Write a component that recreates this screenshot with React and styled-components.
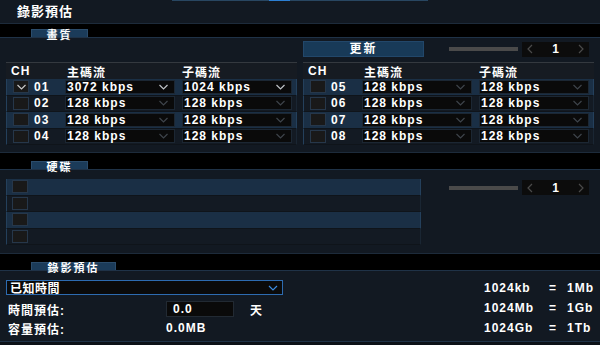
import React from 'react'
import styled, { createGlobalStyle } from 'styled-components'

const GlobalStyle = createGlobalStyle`
  html, body { margin: 0; padding: 0; background: #0d1218; }
  body { font-family: "Liberation Sans", "Noto Sans CJK TC", sans-serif; }
`

const Page = styled.div`
  width: 600px;
  height: 345px;
  background: #121922;
  color: #fff;
  font-weight: bold;
  overflow: hidden;
  display: flex;
  flex-direction: column;
`

const Header = styled.div`
  height: 23px;
  display: flex;
  flex-direction: column;
`

const TopLine = styled.div`
  margin-left: 172px;
  width: 256px;
  height: 1px;
  background: #284661;
  display: flex;
`

const TopLineActive = styled.div`
  margin-left: 97px;
  width: 21px;
  background: #2b7fd4;
`

const Title = styled.div`
  padding-left: 17px;
  margin-top: 1px;
  font-size: 13px;
  line-height: 20px;
  letter-spacing: 1px;
`

const Band = styled.div`
  height: ${p => p.h}px;
  background: #000;
  border-top: 1px solid #1d2b3b;
  border-bottom: 1px solid #1f3247;
  display: flex;
  align-items: flex-end;
  padding-left: 31px;
`

const Tab = styled.div`
  width: ${p => p.w}px;
  height: 8px;
  box-sizing: border-box;
  background: #1b3b59;
  border: 1px solid #2b4c6b;
  border-bottom: none;
  font-size: 11px;
  line-height: 11px;
  text-align: center;
  letter-spacing: 2px;
  white-space: nowrap;
`

const Panel = styled.div`
  height: ${p => p.h}px;
  box-sizing: border-box;
  padding: ${p => p.pad || '0 6px'};
  display: flex;
  flex-direction: ${p => p.dir || 'column'};
`

const Toolbar = styled.div`
  display: flex;
  padding-left: 297px;
  height: 16px;
  align-items: center;
`

const UpdateButton = styled.div`
  width: 121px;
  height: 16px;
  box-sizing: border-box;
  background: #183a58;
  border: 1px solid #22476a;
  font-size: 12px;
  line-height: 14px;
  text-align: center;
  letter-spacing: 2px;
`

const Slider = styled.div`
  width: 69px;
  height: 4px;
  background: #4a4a4a;
  margin-left: ${p => p.ml}px;
`

const Pager = styled.div`
  width: 67px;
  height: 15px;
  background: #0c0c0c;
  display: flex;
  align-items: center;
  justify-content: space-between;
  padding: 0 5px;
  box-sizing: border-box;
  font-size: 12px;
`

const Tables = styled.div`
  display: flex;
  gap: 6px;
  margin-top: 5px;
`

const Table = styled.div`
  width: 291px;
  display: flex;
  flex-direction: column;
`

const HeadRow = styled.div`
  height: 17px;
  display: flex;
  align-items: center;
  background: #161b22;
  border-top: 1px solid #34393f;
  box-sizing: border-box;
  font-size: 12px;
  letter-spacing: 1px;
`

const HeadCell = styled.div`
  width: ${p => p.w ? p.w + 'px' : 'auto'};
  padding-left: ${p => p.pl || 0}px;
  box-sizing: border-box;
`

const Row = styled.div`
  height: 16.5px;
  box-sizing: border-box;
  display: flex;
  align-items: center;
  background: ${p => p.alt ? '#1a2f45' : '#131a23'};
  border-left: 1px solid #24405c;
  border-right: 1px solid ${p => p.alt ? '#24405c' : '#1a2633'};
  border-bottom: 1px solid #0f141a;
  font-size: 12px;
  letter-spacing: 1px;
`

const Check = styled.div`
  width: 16px;
  height: 13px;
  box-sizing: border-box;
  margin-left: ${p => p.ml || 6}px;
  background: #191919;
  border: 1px solid #26374a;
  display: flex;
  align-items: center;
  justify-content: center;
`

const Num = styled.div`
  width: 26px;
  margin-left: 5px;
`

const Select = styled.div`
  width: ${p => p.w}px;
  height: 14px;
  margin-left: ${p => p.ml}px;
  box-sizing: border-box;
  background: #0a0a0a;
  border: 1px solid ${p => p.active ? '#2d6bb0' : '#1c2733'};
  display: flex;
  align-items: center;
  justify-content: space-between;
  padding: 0 6px 0 1px;
  white-space: nowrap;
`

const DiskArea = styled.div`
  display: flex;
  margin-top: 9px;
`

const DiskList = styled.div`
  width: 415px;
  display: flex;
  flex-direction: column;
`

const DiskControls = styled.div`
  display: flex;
  align-items: center;
  height: 15px;
  margin-top: 1px;
`

const EstimateLeft = styled.div`
  width: 300px;
  display: flex;
  flex-direction: column;
  padding-top: 9px;
`

const ModeSelect = styled(Select)`
  height: 15px;
  margin-left: 0;
  padding: 0 4px 0 3px;
  font-size: 12px;
  letter-spacing: 0.5px;
`

const FieldRow = styled.div`
  display: flex;
  align-items: center;
  height: 16px;
  margin-top: ${p => p.mt}px;
  font-size: 12px;
  letter-spacing: 1px;
`

const FieldLabel = styled.div`
  width: 158px;
  padding-left: 2px;
`

const NumInput = styled.div`
  width: 68px;
  height: 16px;
  box-sizing: border-box;
  background: #0a0a0a;
  border: 1px solid #222a33;
  padding-left: 6px;
  line-height: 14px;
`

const Unit = styled.div`
  margin-left: 16px;
`

const Conversions = styled.div`
  margin-left: 186px;
  padding-top: 7px;
  display: grid;
  grid-template-columns: 65px 18px auto;
  grid-auto-rows: 20px;
  align-items: center;
  font-size: 12px;
  letter-spacing: 1px;
`

const Footer = styled.div`
  flex: 1;
  border-top: 1px solid #1f3247;
  background: #0c1117;
`

const Chevron = ({ color = '#4a4f55', w = 9 }) => (
  <svg width={w} height="6" viewBox="0 0 9 6">
    <polyline points="0.5,1 4.5,5 8.5,1" fill="none" stroke={color} strokeWidth="1.2" />
  </svg>
)

const Arrow = ({ dir }) => (
  <svg width="6" height="10" viewBox="0 0 6 10">
    <polyline points={dir === 'left' ? '5,1 1,5 5,9' : '1,1 5,5 1,9'} fill="none" stroke="#4a4a4a" strokeWidth="1.2" />
  </svg>
)

const PagerBox = ({ ml }) => (
  <Pager style={{ marginLeft: ml }}>
    <Arrow dir="left" />
    <span>1</span>
    <Arrow dir="right" />
  </Pager>
)

const left = ['01', '02', '03', '04']
const right = ['05', '06', '07', '08']

const StreamTable = ({ chans, first }) => (
  <Table>
    <HeadRow>
      <HeadCell w={60} pl={5}>CH</HeadCell>
      <HeadCell w={116} pl={1}>主碼流</HeadCell>
      <HeadCell>子碼流</HeadCell>
    </HeadRow>
    {chans.map((ch, i) => {
      const on = first && i === 0
      return (
        <Row key={ch} alt={i % 2 === 0}>
          <Check>{on && <Chevron color="#c8c8c8" w={9} />}</Check>
          <Num>{ch}</Num>
          <Select w={110} ml={5}>
            <span>{on ? '3072 kbps' : '128 kbps'}</span>
            <Chevron color={on ? '#bfc3c7' : '#3e444b'} />
          </Select>
          <Select w={110} ml={7}>
            <span>{on ? '1024 kbps' : '128 kbps'}</span>
            <Chevron color={on ? '#bfc3c7' : '#3e444b'} />
          </Select>
        </Row>
      )
    })}
  </Table>
)

export default function App() {
  return (
    <Page>
      <GlobalStyle />
      <Header>
        <TopLine><TopLineActive /></TopLine>
        <Title>錄影預估</Title>
      </Header>

      <Band h={13}><Tab w={57}>畫質</Tab></Band>
      <Panel h={114} pad="3px 6px 0">
        <Toolbar>
          <UpdateButton>更新</UpdateButton>
          <Slider ml={25} />
          <PagerBox ml={4} />
        </Toolbar>
        <Tables>
          <StreamTable chans={left} first />
          <StreamTable chans={right} />
        </Tables>
      </Panel>

      <Band h={16}><Tab w={57}>硬碟</Tab></Band>
      <Panel h={83}>
        <DiskArea>
          <DiskList>
            {[0, 1, 2, 3].map(i => (
              <Row key={i} alt={i % 2 === 0}>
                <Check ml={5} />
              </Row>
            ))}
          </DiskList>
          <DiskControls>
            <Slider ml={28} />
            <PagerBox ml={4} />
          </DiskControls>
        </DiskArea>
      </Panel>

      <Band h={16}><Tab w={85}>錄影預估</Tab></Band>
      <Panel h={70} dir="row">
        <EstimateLeft>
          <ModeSelect w={277} active>
            <span>已知時間</span>
            <Chevron color="#3b8be0" w={10} />
          </ModeSelect>
          <FieldRow mt={6}>
            <FieldLabel>時間預估:</FieldLabel>
            <NumInput>0.0</NumInput>
            <Unit>天</Unit>
          </FieldRow>
          <FieldRow mt={3}>
            <FieldLabel>容量預估:</FieldLabel>
            <span>0.0MB</span>
          </FieldRow>
        </EstimateLeft>
        <Conversions>
          <span>1024kb</span><span>=</span><span>1Mb</span>
          <span>1024Mb</span><span>=</span><span>1Gb</span>
          <span>1024Gb</span><span>=</span><span>1Tb</span>
        </Conversions>
      </Panel>
      <Footer />
    </Page>
  )
}
